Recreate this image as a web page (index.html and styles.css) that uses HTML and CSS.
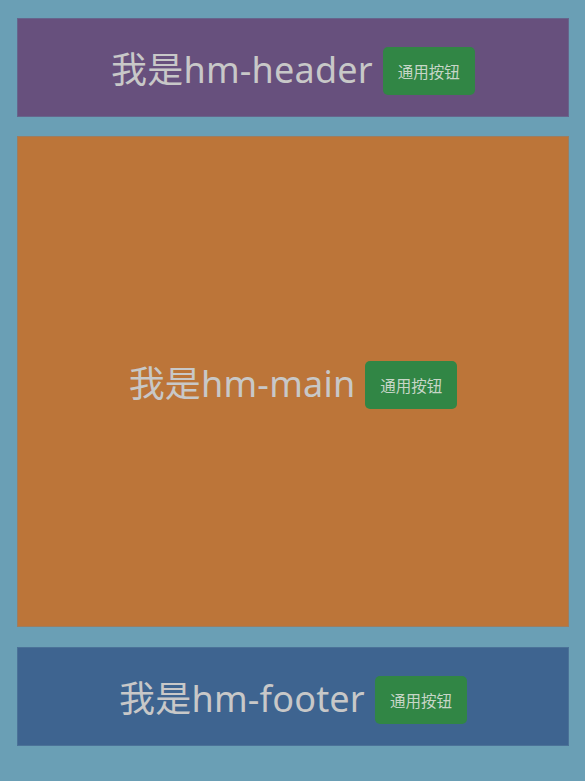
FILE: index.html
```html
<!DOCTYPE html>
<html lang="zh">
<head>
<meta charset="utf-8">
<title>hm layout</title>
<link rel="stylesheet" href="styles.css">
</head>
<body>
<div class="app">
  <header class="box box-header">
    <div class="line"><span class="title">我是hm-header</span><button class="btn">通用按钮</button></div>
  </header>
  <main class="box box-main">
    <div class="line"><span class="title">我是hm-main</span><button class="btn">通用按钮</button></div>
  </main>
  <footer class="box box-footer">
    <div class="line"><span class="title">我是hm-footer</span><button class="btn">通用按钮</button></div>
  </footer>
</div>
</body>
</html>
```

FILE: styles.css
```css
html, body {
  margin: 0;
  padding: 0;
  background: #6a9fb5;
}
body {
  font-family: "Noto Sans", "Noto Sans CJK SC", sans-serif;
}
.app {
  display: flex;
  flex-direction: column;
  padding: 18px 16px 35px 17px;
  gap: 19px;
}
.box {
  display: flex;
  align-items: center;
  justify-content: center;
  box-sizing: border-box;
  border: 1px solid rgba(100, 140, 170, 0.35);
}
.box-header { height: 99px; background: #67507d; }
.box-main { height: 491px; background: #bc7539; margin-bottom: 1px; }
.box-footer { height: 99px; background: #3e6490; }
.line {
  display: flex;
  align-items: center;
  gap: 10px;
  padding-top: 6px;
}
.title {
  font-size: 36px;
  line-height: 1;
  color: #c8c8c8;
  margin-top: -2px;
  letter-spacing: 0.2px;
}
.btn {
  width: 92px;
  height: 48px;
  border: none;
  border-radius: 5px;
  background: #318645;
  color: #c7d6c7;
  font-family: "Noto Sans CJK SC", sans-serif;
  font-size: 15.5px;
  padding: 0;
}
```
